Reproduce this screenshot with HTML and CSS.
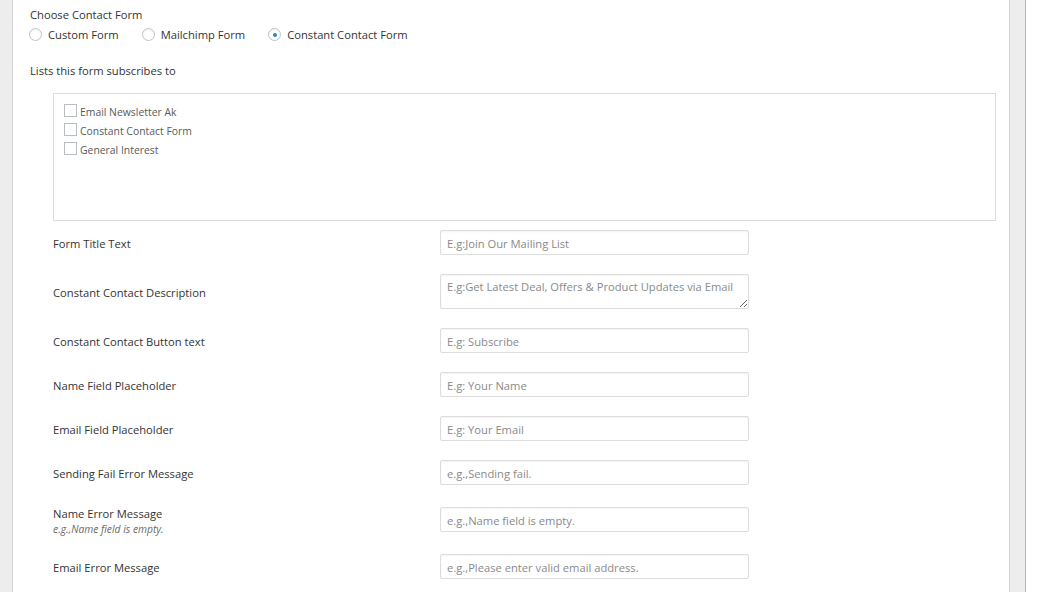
FILE: index.html
```html
<!DOCTYPE html>
<html lang="en">
<head>
<meta charset="utf-8">
<title>Constant Contact Form Settings</title>
<link rel="stylesheet" href="styles.css">
</head>
<body>
<div class="layout">
  <div class="gutter-left"></div>
  <main class="panel">
    <div class="field-title">Choose Contact Form</div>
    <div class="radio-row">
      <label class="radio"><input type="radio" name="ftype"> <span>Custom Form</span></label>
      <label class="radio"><input type="radio" name="ftype"> <span>Mailchimp Form</span></label>
      <label class="radio"><input type="radio" name="ftype" checked> <span>Constant Contact Form</span></label>
    </div>
    <div class="field-title lists-title">Lists this form subscribes to</div>
    <div class="list-box">
      <label class="check"><input type="checkbox"> <span>Email Newsletter Ak</span></label>
      <label class="check"><input type="checkbox"> <span>Constant Contact Form</span></label>
      <label class="check"><input type="checkbox"> <span>General Interest</span></label>
    </div>
    <div class="rows">
      <div class="row">
        <div class="label">Form Title Text</div>
        <input class="text" type="text" placeholder="E.g:Join Our Mailing List">
      </div>
      <div class="row">
        <div class="label">Constant Contact Description</div>
        <textarea class="area" placeholder="E.g:Get Latest Deal, Offers &amp; Product Updates via Email"></textarea>
      </div>
      <div class="row">
        <div class="label">Constant Contact Button text</div>
        <input class="text" type="text" placeholder="E.g: Subscribe">
      </div>
      <div class="row">
        <div class="label">Name Field Placeholder</div>
        <input class="text" type="text" placeholder="E.g: Your Name">
      </div>
      <div class="row">
        <div class="label">Email Field Placeholder</div>
        <input class="text" type="text" placeholder="E.g: Your Email">
      </div>
      <div class="row">
        <div class="label">Sending Fail Error Message</div>
        <input class="text" type="text" placeholder="e.g.,Sending fail.">
      </div>
      <div class="row">
        <div class="label">Name Error Message<span class="hint">e.g.,Name field is empty.</span></div>
        <input class="text" type="text" placeholder="e.g.,Name field is empty.">
      </div>
      <div class="row">
        <div class="label">Email Error Message</div>
        <input class="text" type="text" placeholder="e.g.,Please enter valid email address.">
      </div>
    </div>
  </main>
  <div class="gutter-right"></div>
</div>
</body>
</html>
```

FILE: styles.css
```css
html, body {
  margin: 0;
  padding: 0;
  overflow: hidden;
  background: #ffffff;
}

body {
  font-family: "Open Sans", "DejaVu Sans", sans-serif;
  font-size: 11.2px;
  line-height: 17px;
  color: #3a3a3a;
}

.layout {
  display: flex;
  min-height: 100vh;
}

.gutter-left {
  width: 12px;
  flex: none;
  background: #ededed;
}

.panel {
  width: 998px;
  flex: none;
  border-left: 1px solid #d3d3d3;
  border-right: 1px solid #d3d3d3;
  padding: 6px 0 0 17px;
  box-sizing: border-box;
  background: #ffffff;
}

.gutter-right {
  width: 15px;
  flex: none;
  background: #ededed;
  border-right: 1px solid #c9bb7e;
}

.field-title {
  color: #333;
}

.radio-row {
  display: flex;
  align-items: center;
  gap: 23px;
  margin: 3px 0 0 -1px;
  height: 17px;
}

.radio {
  display: inline-flex;
  align-items: center;
  gap: 6px;
  color: #333;
}

.radio input {
  appearance: none;
  -webkit-appearance: none;
  margin: 0;
  width: 13px;
  height: 13px;
  border: 1px solid #bfc3c7;
  border-radius: 50%;
  background: #fff;
  box-shadow: inset 0 1px 2px rgba(0,0,0,0.07);
  box-sizing: border-box;
  position: relative;
}

.radio input:checked::after {
  content: "";
  position: absolute;
  left: 3.5px;
  top: 3.5px;
  width: 4px;
  height: 4px;
  border-radius: 50%;
  background: #2a86bd;
}

.lists-title {
  margin-top: 19px;
}

.list-box {
  margin: 14px 0 0 23px;
  width: 943px;
  height: 128px;
  box-sizing: border-box;
  border: 1px solid #dcdcdc;
  padding: 7px 10px;
  display: flex;
  flex-direction: column;
}

.check {
  display: flex;
  align-items: center;
  gap: 3px;
  height: 19px;
  font-size: 10.4px;
  color: #5a5a5a;
}

.check input {
  appearance: none;
  -webkit-appearance: none;
  margin: 0;
  width: 13px;
  height: 13px;
  border: 1px solid #b9bdc1;
  background: #fff;
  box-sizing: border-box;
}

.check span {
  padding-top: 3px;
}

.rows {
  margin: 9px 0 0 23px;
  display: flex;
  flex-direction: column;
  gap: 19px;
}

.row {
  display: grid;
  grid-template-columns: 387px 309px;
  align-items: center;
}

.label {
  color: #333;
  padding-top: 1px;
}

.hint {
  display: block;
  font-size: 10.3px;
  line-height: 12px;
  font-style: italic;
  color: #6a6a6a;
  margin-top: 1px;
}

.text,
.area {
  width: 309px;
  box-sizing: border-box;
  border: 1px solid #dddddd;
  border-radius: 2px;
  box-shadow: inset 0 1px 2px rgba(0,0,0,0.05);
  font-family: "Open Sans", "DejaVu Sans", sans-serif;
  font-size: 11.2px;
  color: #333;
  margin: 0;
  background: #fff;
}

.text {
  height: 25px;
  padding: 1px 6px 0;
}

.area {
  height: 35px;
  padding: 3px 6px;
  line-height: 17px;
  resize: vertical;
  display: block;
}

.text::placeholder,
.area::placeholder {
  color: #8a8a8a;
  opacity: 1;
}
```
